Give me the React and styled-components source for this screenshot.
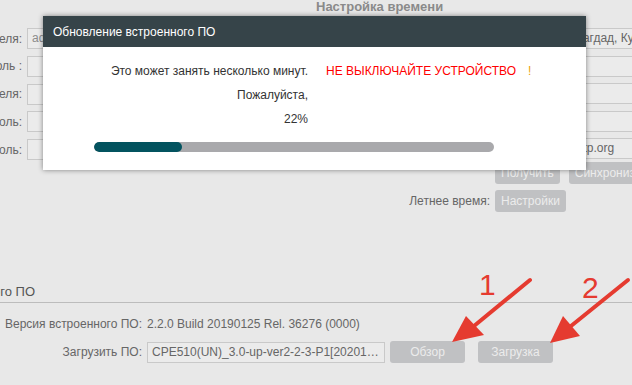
import styled, { createGlobalStyle } from "styled-components";

const GlobalStyle = createGlobalStyle`
    html, body {
        margin: 0;
        padding: 0;
        background: #e8e8e8;
    }
    body {
        font-family: "Liberation Sans", Arial, sans-serif;
    }
`;

const Page = styled.div`
    position: relative;
    width: 632px;
    height: 385px;
    overflow: hidden;
    background: #e8e8e8;
    color: #666;
    font-size: 12px;
`;

const TopSection = styled.div`
    display: flex;
    height: 212px;
`;

const AccountPanel = styled.div`
    width: 230px;
    flex-shrink: 0;
    padding-top: 28px;
    display: flex;
    flex-direction: column;
    gap: 6.75px;
`;

const TimePanel = styled.div`
    flex: 1;
    display: flex;
    flex-direction: column;
`;

const PanelTitle = styled.div`
    height: 28px;
    padding-left: 86px;
    font-size: 13px;
    font-weight: bold;
    line-height: 14px;
    color: #8a8a8a;
    white-space: nowrap;
`;

const FieldList = styled.div`
    display: flex;
    flex-direction: column;
    gap: 6.5px;
`;

const FieldRow = styled.div`
    display: flex;
    align-items: center;
    gap: 5px;
    height: ${(props) => props.$h || 21}px;
    margin-top: ${(props) => props.$top || 0}px;
    padding-left: ${(props) => props.$indent || 0}px;
`;

const Label = styled.div`
    width: ${(props) => props.$w}px;
    flex-shrink: 0;
    display: flex;
    justify-content: flex-end;
    overflow: hidden;
    white-space: nowrap;
    color: #666;
`;

const TextField = styled.div`
    box-sizing: border-box;
    width: ${(props) => props.$w}px;
    height: 21px;
    flex-shrink: 0;
    border: 1px solid #c9c9c9;
    background: #ebebeb;
    padding: 0 4px;
    line-height: 19px;
    white-space: nowrap;
    overflow: hidden;
    text-overflow: ellipsis;
    color: ${(props) => (props.$muted ? "#8c8c8c" : "#666")};
`;

const Button = styled.button`
    box-sizing: border-box;
    height: 22px;
    flex-shrink: 0;
    ${(props) => (props.$w ? `width: ${props.$w}px;` : "padding: 0 6px;")}
    margin-left: ${(props) => props.$gap || 0}px;
    border: none;
    border-radius: 3px;
    background: #c0c1c3;
    color: #ececec;
    font: 12px "Liberation Sans", Arial, sans-serif;
    white-space: nowrap;
`;

const FirmwareSection = styled.section`
    margin-top: 72px;
`;

const SectionHeader = styled.div`
    height: 18px;
    display: flex;
    border-bottom: 1px solid #bcbcbc;
`;

const SectionTitle = styled.div`
    width: 35px;
    display: flex;
    justify-content: flex-end;
    overflow: hidden;
    white-space: nowrap;
    font-size: 13px;
    line-height: 16px;
    color: #555;
`;

const FirmwareRows = styled.div`
    padding-top: 10px;
    display: flex;
    flex-direction: column;
    gap: 6px;
`;

const Value = styled.span`
    color: #666;
    white-space: nowrap;
`;

/* modal */
const Modal = styled.div`
    position: absolute;
    top: 16px;
    left: 43px;
    width: 543px;
    background: #fff;
    box-shadow: 0 0 5px rgba(0, 0, 0, 0.45);
`;

const ModalHeader = styled.div`
    height: 31px;
    display: flex;
    align-items: center;
    padding-left: 10px;
    background: #364449;
    color: #fff;
    font-size: 12px;
`;

const ModalBody = styled.div`
    padding: 16px 0 18px 51px;
`;

const MessageGrid = styled.div`
    display: grid;
    grid-template-columns: 214px auto;
    column-gap: 18px;
    row-gap: 8px;
    line-height: 16px;
    color: #333;
`;

const MessageText = styled.div`
    text-align: right;
    white-space: nowrap;
`;

const Warning = styled.div`
    color: #ff0000;
    white-space: nowrap;
`;

const Bang = styled.span`
    margin-left: 12px;
    color: #eca20b;
`;

const Progress = styled.div`
    width: 400px;
    height: 10px;
    margin-top: 15px;
    border-radius: 5px;
    background: #a9a9ac;
    overflow: hidden;
`;

const ProgressFill = styled.div`
    height: 100%;
    border-radius: 5px;
    background: #03535f;
`;

const Annotations = styled.svg`
    position: absolute;
    left: 0;
    top: 0;
    pointer-events: none;
`;

const RED = "#e53b30";

function Arrow({ from, base, tip, left, right }) {
    return (
        <g>
            <line
                x1={from[0]}
                y1={from[1]}
                x2={base[0]}
                y2={base[1]}
                stroke={RED}
                strokeWidth="4"
                strokeLinecap="round"
            />
            <polygon points={`${tip} ${left} ${right}`} fill={RED} />
        </g>
    );
}

const accountRows = [
    ["Имя пользователя:", "admin"],
    ["Пароль :", ""],
    ["Новое имя пользователя:", ""],
    ["Новый пароль:", ""],
    ["Подтвердите пароль:", ""],
];

const timeRows = [
    ["Часовой пояс:", "(GMT+03:00) Багдад, Кувейт, Эр-Рияд"],
    ["Дата:", "01/25/2019"],
    ["Время:", "12:00:00"],
    ["Сервер NTP 1:", "0.pool"],
    ["Сервер NTP 2:", "0.europe.pool.ntp.org"],
];

export default function App() {
    const percent = 22;
    return (
        <Page>
            <GlobalStyle />
            <TopSection>
                <AccountPanel>
                    {accountRows.map(([label, value]) => (
                        <FieldRow key={label}>
                            <Label $w={22}>{label}</Label>
                            <TextField $w={190} $muted>
                                {value}
                            </TextField>
                        </FieldRow>
                    ))}
                </AccountPanel>
                <TimePanel>
                    <PanelTitle>Настройка времени</PanelTitle>
                    <FieldList>
                        {timeRows.map(([label, value]) => (
                            <FieldRow key={label}>
                                <Label $w={260}>{label}</Label>
                                <TextField $w={240}>{value}</TextField>
                            </FieldRow>
                        ))}
                    </FieldList>
                    <FieldRow $h={22} $top={3} $indent={265}>
                        <Button>Получить</Button>
                        <Button $gap={4}>Синхронизировать</Button>
                    </FieldRow>
                    <FieldRow $h={22} $top={6}>
                        <Label $w={260}>Летнее время:</Label>
                        <Button>Настройки</Button>
                    </FieldRow>
                </TimePanel>
            </TopSection>

            <FirmwareSection>
                <SectionHeader>
                    <SectionTitle>Обновление встроенного ПО</SectionTitle>
                </SectionHeader>
                <FirmwareRows>
                    <FieldRow $h={22}>
                        <Label $w={142}>Версия встроенного ПО:</Label>
                        <Value>2.2.0 Build 20190125 Rel. 36276 (0000)</Value>
                    </FieldRow>
                    <FieldRow $h={22}>
                        <Label $w={142}>Загрузить ПО:</Label>
                        <TextField $w={238}>
                            CPE510(UN)_3.0-up-ver2-2-3-P1[20201209-rel47353].bin
                        </TextField>
                        <Button $w={75}>Обзор</Button>
                        <Button $w={75} $gap={8}>Загрузка</Button>
                    </FieldRow>
                </FirmwareRows>
            </FirmwareSection>

            <Modal>
                <ModalHeader>Обновление встроенного ПО</ModalHeader>
                <ModalBody>
                    <MessageGrid>
                        <MessageText>Это может занять несколько минут.</MessageText>
                        <Warning>
                            НЕ ВЫКЛЮЧАЙТЕ УСТРОЙСТВО<Bang>!</Bang>
                        </Warning>
                        <MessageText>Пожалуйста,</MessageText>
                        <div />
                        <MessageText>{percent}%</MessageText>
                        <div />
                    </MessageGrid>
                    <Progress>
                        <ProgressFill style={{ width: `${percent}%` }} />
                    </Progress>
                </ModalBody>
            </Modal>

            <Annotations width="632" height="385" viewBox="0 0 632 385">
                <text
                    x="479"
                    y="295"
                    fill={RED}
                    fontSize="30"
                    fontFamily='"Liberation Sans", Arial, sans-serif'
                >
                    1
                </text>
                <text
                    x="582"
                    y="298"
                    fill={RED}
                    fontSize="30"
                    fontFamily='"Liberation Sans", Arial, sans-serif'
                >
                    2
                </text>
                <Arrow
                    from={[530, 280]}
                    base={[474, 326]}
                    tip="452,342"
                    left="466,316"
                    right="484,335"
                />
                <Arrow
                    from={[628, 280]}
                    base={[571, 326]}
                    tip="550,343"
                    left="563,316"
                    right="580,336"
                />
            </Annotations>
        </Page>
    );
}
